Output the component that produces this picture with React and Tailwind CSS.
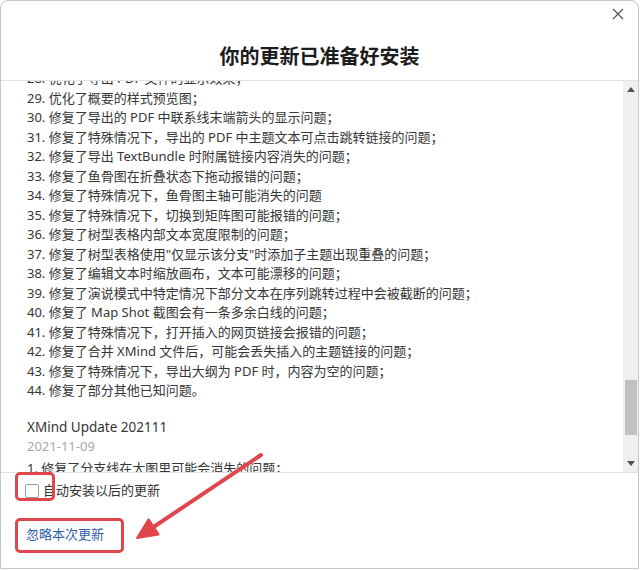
const notes = [
  '28. 优化了导出 PDF 文件的显示效果；',
  '29. 优化了概要的样式预览图；',
  '30. 修复了导出的 PDF 中联系线末端箭头的显示问题；',
  '31. 修复了特殊情况下，导出的 PDF 中主题文本可点击跳转链接的问题；',
  '32. 修复了导出 TextBundle 时附属链接内容消失的问题；',
  '33. 修复了鱼骨图在折叠状态下拖动报错的问题；',
  '34. 修复了特殊情况下，鱼骨图主轴可能消失的问题',
  '35. 修复了特殊情况下，切换到矩阵图可能报错的问题；',
  '36. 修复了树型表格内部文本宽度限制的问题；',
  '37. 修复了树型表格使用"仅显示该分支"时添加子主题出现重叠的问题；',
  '38. 修复了编辑文本时缩放画布，文本可能漂移的问题；',
  '39. 修复了演说模式中特定情况下部分文本在序列跳转过程中会被截断的问题；',
  '40. 修复了 Map Shot 截图会有一条多余白线的问题；',
  '41. 修复了特殊情况下，打开插入的网页链接会报错的问题；',
  '42. 修复了合并 XMind 文件后，可能会丢失插入的主题链接的问题；',
  '43. 修复了特殊情况下，导出大纲为 PDF 时，内容为空的问题；',
  '44. 修复了部分其他已知问题。',
]

function Scrollbar() {
  return (
    <div className="w-[15px] bg-[#f0f0f0] flex flex-col">
      <div className="h-[17px] flex items-center justify-center">
        <svg width="8" height="5" viewBox="0 0 8 5"><path d="M4 0 L8 5 L0 5 Z" fill="#505050" /></svg>
      </div>
      <div className="flex-1 pt-[282px]">
        <div className="mx-auto w-[12px] h-[55px] bg-[#c1c1c1]" />
      </div>
      <div className="h-[17px] flex items-center justify-center">
        <svg width="8" height="5" viewBox="0 0 8 5"><path d="M0 0 L8 0 L4 5 Z" fill="#505050" /></svg>
      </div>
    </div>
  )
}

export default function App() {
  return (
    <div
      className="relative w-[640px] h-[570px] bg-white overflow-hidden"
      style={{ fontFamily: '"Noto Sans", "Noto Sans CJK SC", sans-serif' }}
    >
      <div className="w-[639px] h-[569px] border border-[#c6c6c6] rounded-t-[8px] flex flex-col bg-white">
        <header className="relative h-[80px] border-b border-[#e2e2e2] shrink-0">
          <button className="absolute left-[611px] top-[7px] w-[12px] h-[12px]">
            <svg width="12" height="12" viewBox="0 0 12 12">
              <path d="M1 1 L11 11 M11 1 L1 11" stroke="#555" strokeWidth="1.2" />
            </svg>
          </button>
          <h1 className="pt-[43px] text-center text-[20px] leading-[26px] font-bold text-[#1c1c1c]">
            你的更新已准备好安装
          </h1>
        </header>

        <main className="flex h-[391px] shrink-0">
          <div className="flex-1 overflow-hidden pl-[26px] text-[13px] leading-[19.5px] text-[#363636]">
            <div className="-mt-[12px]">
              {notes.map(n => (
                <p key={n} className="whitespace-nowrap">{n}</p>
              ))}
              <p className="mt-[16px] text-[13.5px] leading-[20px]">XMind Update 202111</p>
              <p className="text-[#a8a8a8] leading-[18px]">2021-11-09</p>
              <p className="mt-[4px]">1. 修复了分支线在大图里可能会消失的问题；</p>
            </div>
          </div>
          <Scrollbar />
        </main>

        <footer className="flex-1 border-t border-[#e2e2e2] px-[24px] pt-[9px]">
          <label className="flex items-center gap-[4px] h-[18px] text-[13px] text-[#333]">
            <span className="w-[14px] h-[14px] border border-[#9c9c9c] rounded-[2px] bg-white" />
            自动安装以后的更新
          </label>
          <a className="block mt-[25px] pl-px text-[13px] leading-[18px] text-[#2f5ea8]">忽略本次更新</a>
        </footer>
      </div>

      <div className="absolute left-[15px] top-[472px] w-[40px] h-[29px] border-[3px] border-[#e0474c] rounded-[5px]" />
      <div className="absolute left-[15px] top-[518px] w-[109px] h-[35px] border-[3px] border-[#e0474c] rounded-[5px]" />

      <svg className="absolute left-0 top-0 pointer-events-none" width="640" height="570" viewBox="0 0 640 570">
        <line x1="261" y1="455" x2="152" y2="528" stroke="#e0474c" strokeWidth="4" strokeLinecap="round" />
        <polygon points="137,538 158.6,534.4 148.6,519.4" fill="#e0474c" stroke="#e0474c" strokeWidth="2" strokeLinejoin="round" />
      </svg>
    </div>
  )
}
